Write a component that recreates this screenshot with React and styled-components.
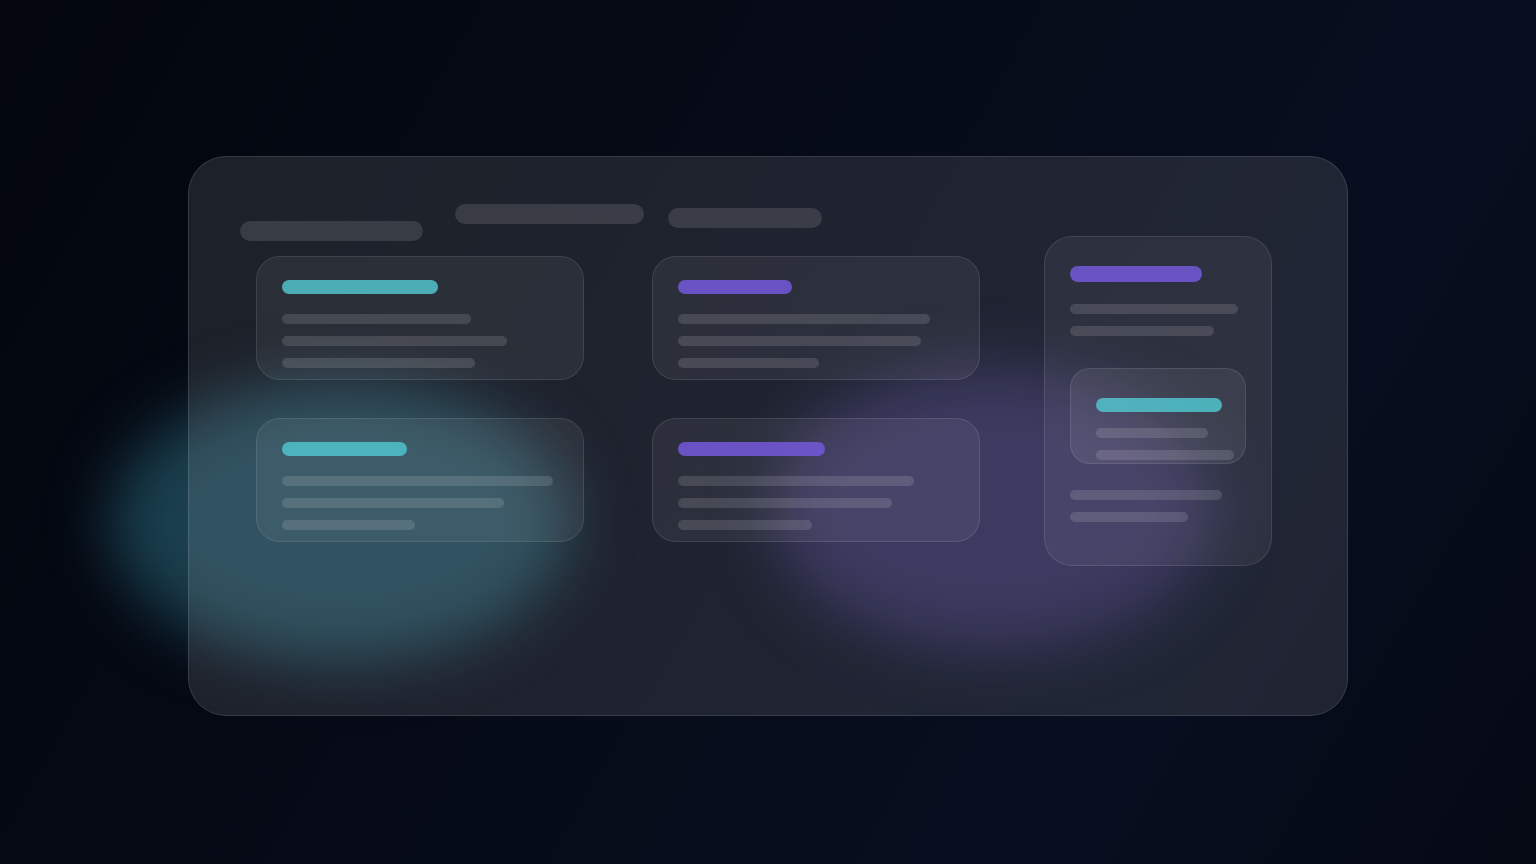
import React from 'react';
import styled, { createGlobalStyle } from 'styled-components';

const GlobalStyle = createGlobalStyle`
  html, body {
    margin: 0;
    padding: 0;
    background: #050912;
    font-family: 'Inter', 'Liberation Sans', sans-serif;
  }
  * {
    box-sizing: border-box;
  }
`;

const Stage = styled.div`
  position: relative;
  width: 100%;
  height: 100vh;
  overflow: hidden;
  display: flex;
  align-items: center;
  justify-content: center;
  padding-top: 8px;
  background: linear-gradient(120deg, #03060d 0%, #060b18 45%, #080e20 75%, #050914 100%);
`;

// Soft coloured glow behind the glass panel
const Blob = styled.div`
  position: absolute;
  left: ${(p) => p.x}px;
  top: ${(p) => p.y}px;
  width: ${(p) => p.w}px;
  height: ${(p) => p.h}px;
  border-radius: 50%;
  background: ${(p) => p.color};
  filter: blur(30px);
  z-index: 0;
`;

const Panel = styled.div`
  position: relative;
  z-index: 1;
  width: 1160px;
  height: 560px;
  padding: 47px 51px;
  border-radius: 38px;
  background: rgba(255, 255, 255, 0.1);
  border: 1px solid rgba(255, 255, 255, 0.12);
  display: flex;
  flex-direction: column;
`;

const Header = styled.div`
  display: flex;
  align-items: flex-start;
  height: 37px;
`;

const HeaderPill = styled.div`
  width: ${(p) => p.w}px;
  height: 20px;
  margin-top: ${(p) => p.top || 0}px;
  margin-left: ${(p) => p.gap || 0}px;
  border-radius: 10px;
  background: rgba(255, 255, 255, 0.12);
`;

const Body = styled.div`
  display: grid;
  grid-template-columns: 396px 392px 228px;
  align-items: start;
  margin-top: 15px;
  padding-left: 16px;
`;

const Column = styled.div`
  display: flex;
  flex-direction: column;
  gap: 38px;
  width: ${(p) => p.w || 328}px;
  margin-top: ${(p) => p.shift || 0}px;
`;

const Card = styled.div`
  height: ${(p) => p.h || 124}px;
  padding: ${(p) => p.pad || '23px 25px'};
  border-radius: ${(p) => p.radius || 24}px;
  background: rgba(255, 255, 255, 0.06);
  border: 1px solid rgba(255, 255, 255, 0.1);
  display: flex;
  flex-direction: column;
`;

const Accent = styled.div`
  width: ${(p) => p.w}px;
  height: ${(p) => p.h || 14}px;
  border-radius: 8px;
  flex-shrink: 0;
  background: ${(p) =>
    p.tone === 'teal' ? 'rgba(80, 192, 202, 0.88)' : 'rgba(114, 88, 214, 0.88)'};
  margin-bottom: ${(p) => p.after || 20}px;
`;

const Line = styled.div`
  width: ${(p) => p.w}px;
  height: 10px;
  border-radius: 5px;
  flex-shrink: 0;
  background: rgba(255, 255, 255, 0.13);
  & + & {
    margin-top: ${(p) => p.gap || 12}px;
  }
`;

const Inset = styled(Card)`
  margin: 32px 0 26px;
  background: rgba(255, 255, 255, 0.07);
`;

const SmallCard = ({ tone, accent, lines }) => (
  <Card>
    <Accent tone={tone} w={accent} />
    {lines.map((w, i) => (
      <Line key={i} w={w} />
    ))}
  </Card>
);

const columns = [
  [
    { tone: 'teal', accent: 156, lines: [189, 225, 193] },
    { tone: 'teal', accent: 125, lines: [271, 222, 133] },
  ],
  [
    { tone: 'purple', accent: 114, lines: [252, 243, 141] },
    { tone: 'purple', accent: 147, lines: [236, 214, 134] },
  ],
];

export default function App() {
  return (
    <>
      <GlobalStyle />
      <Stage>
        <Blob x={110} y={382} w={460} h={280} color="#1a3f4e" />
        <Blob x={772} y={368} w={440} h={282} color="#27234e" />
        <Panel>
          <Header>
            <HeaderPill w={183} top={17} />
            <HeaderPill w={189} gap={32} />
            <HeaderPill w={154} gap={24} top={4} />
          </Header>
          <Body>
            {columns.map((col, ci) => (
              <Column key={ci}>
                {col.map((c, i) => (
                  <SmallCard key={i} {...c} />
                ))}
              </Column>
            ))}
            <Column w={228} shift={-20}>
              <Card h={330} pad="29px 25px" radius={28}>
                <Accent tone="purple" w={132} h={16} after={22} />
                <Line w={168} />
                <Line w={144} />
                <Inset h={96} pad="29px 25px 0" radius={20}>
                  <Accent tone="teal" w={126} after={16} />
                  <Line w={112} />
                  <Line w={138} gap={10} />
                </Inset>
                <Line w={152} />
                <Line w={118} />
              </Card>
            </Column>
          </Body>
        </Panel>
      </Stage>
    </>
  );
}
